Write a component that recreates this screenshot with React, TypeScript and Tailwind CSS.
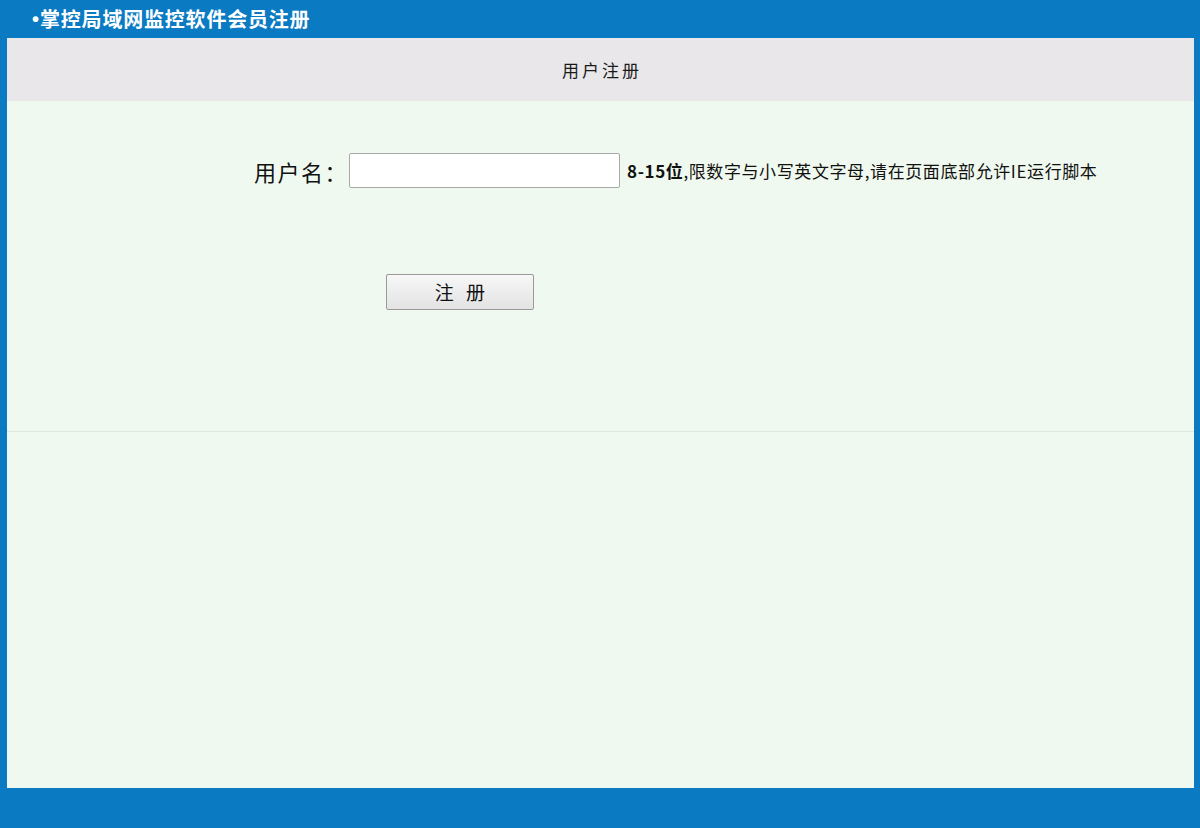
export default function App() {
  const cjk = { fontFamily: '"Noto Sans CJK SC", "Noto Sans", sans-serif' };
  return (
    <div className="flex h-[828px] w-[1200px] flex-col bg-[#0a7bc3]" style={cjk}>
      <div className="flex h-[38px] items-center pl-[32px] text-[20px] font-bold leading-none text-white">
        <span className="mr-[1px] font-['Liberation_Sans',sans-serif]">•</span>
        <span className="tracking-[0.8px]">掌控局域网监控软件会员注册</span>
      </div>

      <div className="ml-[7px] mr-[6px] flex flex-1 flex-col bg-[#f0f9ef]">
        <div className="flex h-[63px] items-center justify-center bg-[#e9e7ea] pl-[3px] text-[17px] tracking-[3px] text-[#1a1a1a]">
          用户注册
        </div>

        <div className="h-[331px] border-b border-[#dfe8dd] pt-[52px]">
          <div className="flex items-center pl-[247px]">
            <label className="w-[95px] text-[22px] leading-none tracking-[1.5px] text-[#111]">用户名：</label>
            <input
              type="text"
              className="h-[35px] w-[271px] rounded-[2px] border border-[#a9a9a9] bg-white px-1 outline-none"
            />
            <span className="ml-[7px] text-[17px] tracking-[0.6px] text-[#111]">
              <b className="font-bold">8-15位</b>,限数字与小写英文字母,请在页面底部允许IE运行脚本
            </span>
          </div>

          <div className="mt-[86px] pl-[379px]">
            <button
              type="button"
              className="h-[36px] w-[148px] rounded-[2px] border border-[#9a9a9a] bg-gradient-to-b from-[#f7f7f7] to-[#e3e3e3] pl-[4px] text-[19px] tracking-[4px] text-[#111]"
            >
              注 册
            </button>
          </div>
        </div>

        <div className="flex-1" />
      </div>

      <div className="h-[40px]" />
    </div>
  );
}
